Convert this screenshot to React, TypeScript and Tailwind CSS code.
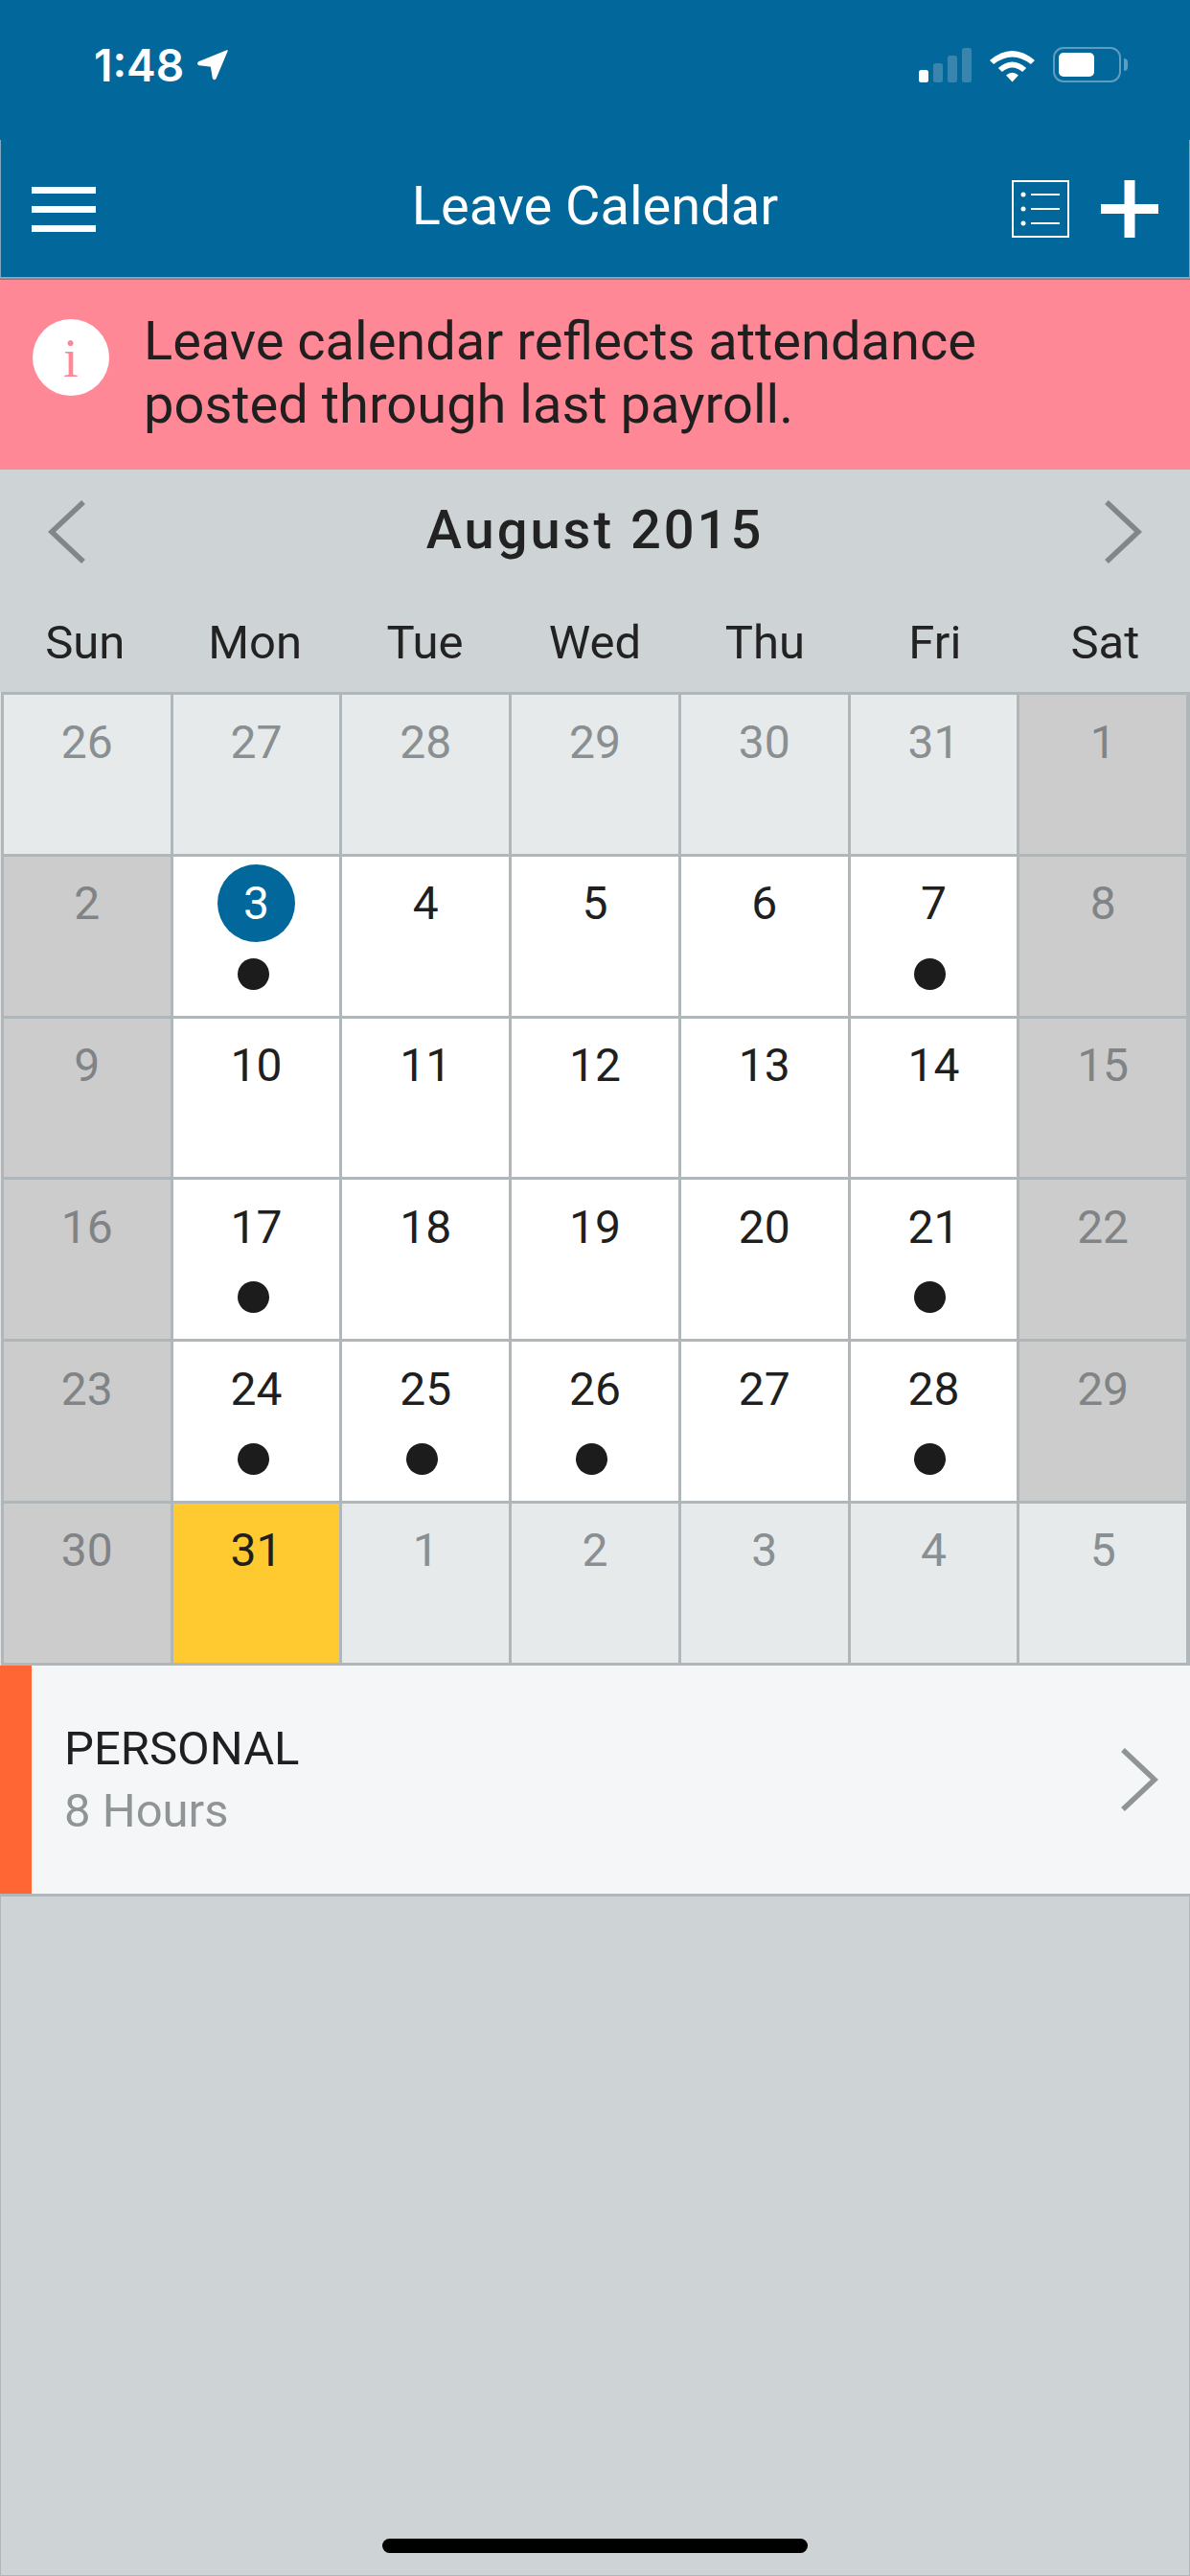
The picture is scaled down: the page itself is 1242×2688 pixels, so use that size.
const weekdays = ['Sun', 'Mon', 'Tue', 'Wed', 'Thu', 'Fri', 'Sat'];

type Kind = 'other' | 'weekend' | 'day' | 'today';
type Cell = { n: number; kind: Kind; dot?: boolean; selected?: boolean };

const o = (n: number): Cell => ({ n, kind: 'other' });
const w = (n: number): Cell => ({ n, kind: 'weekend' });
const d = (n: number, dot = false): Cell => ({ n, kind: 'day', dot });

const cells: Cell[] = [
  o(26), o(27), o(28), o(29), o(30), o(31), w(1),
  w(2), { n: 3, kind: 'day', dot: true, selected: true }, d(4), d(5), d(6), d(7, true), w(8),
  w(9), d(10), d(11), d(12), d(13), d(14), w(15),
  w(16), d(17, true), d(18), d(19), d(20), d(21, true), w(22),
  w(23), d(24, true), d(25, true), d(26, true), d(27), d(28, true), w(29),
  w(30), { n: 31, kind: 'today' }, o(1), o(2), o(3), o(4), o(5),
];

const cellBg: Record<Kind, string> = {
  other: 'bg-[#e6eaeb] text-[#8a8f91]',
  weekend: 'bg-[#cccccc] text-[#808486]',
  day: 'bg-white text-[#1f1f1f]',
  today: 'bg-[#ffca30] text-[#1f1f1f]',
};

function DayCell({ cell }: { cell: Cell }) {
  return (
    <div className={`flex h-[165.8px] flex-col items-center ${cellBg[cell.kind]}`}>
      <div
        className={`mt-[8px] flex h-[81px] w-[81px] items-center justify-center rounded-full pt-[2px] ${
          cell.selected ? 'bg-[#02679a] text-white' : ''
        }`}
      >
        {cell.n}
      </div>
      {cell.dot && <div className="mr-[7px] mt-[17px] h-[33px] w-[33px] rounded-full bg-[#1c1c1c]" />}
    </div>
  );
}

function Chevron({ left, color, className }: { left?: boolean; color: string; className?: string }) {
  return (
    <svg className={className} width="40" height="66" viewBox="0 0 40 66" fill="none" stroke={color} strokeWidth="5.5">
      <path d={left ? 'M37 2 L4 33 L37 64' : 'M3 2 L36 33 L3 64'} />
    </svg>
  );
}

export default function App() {
  return (
    <div className="flex h-[2688px] w-[1242px] flex-col overflow-hidden bg-[#ced3d6] font-['Roboto',sans-serif]">
      {/* status bar */}
      <div className="flex h-[146px] items-start justify-between bg-[#02679a] pl-[98px] pr-[65px] pt-[45px] text-white">
        <div className="flex items-center gap-[14px]">
          <span className="font-['Inter',sans-serif] text-[46px] font-semibold leading-[46px]">1:48</span>
          <svg width="32" height="32" viewBox="0 0 32 32" fill="white">
            <path d="M31 1 L1.5 13 Q0 15 2 15.5 L14.5 17 L16.5 29.5 Q17.5 31.5 19 29.5 Z" stroke="white" strokeWidth="1.5" strokeLinejoin="round" />
          </svg>
        </div>
        <div className="flex items-end gap-[19px] pt-[4px]">
          <svg width="55" height="36" viewBox="0 0 55 36">
            <rect x="0" y="23" width="10" height="13" rx="2.5" fill="white" />
            <rect x="15" y="16" width="10" height="20" rx="2.5" fill="#3a85ae" />
            <rect x="30" y="8" width="10" height="28" rx="2.5" fill="#3a85ae" />
            <rect x="45" y="0" width="10" height="36" rx="2.5" fill="#3a85ae" />
          </svg>
          <svg width="47" height="36" viewBox="0 0 40 36" preserveAspectRatio="none" fill="white">
            <path d="M0 13 Q20 -7 40 13 L36.5 17 Q20 2 3.5 17 Z" />
            <path d="M7.5 21 Q20 8 32.5 21 L29 25 Q20 16 11 25 Z" />
            <path d="M14.5 28.5 Q20 23 25.5 28.5 L20 35.5 Z" />
          </svg>
          <div className="flex items-center gap-[3px]">
            <div className="flex h-[37px] w-[71px] items-center rounded-[11px] border-[2.5px] border-[#5f9dbf] pl-[3.5px]">
              <div className="h-[25px] w-[37px] rounded-[5px] bg-white" />
            </div>
            <div className="h-[13px] w-[4px] rounded-r-full bg-[#5f9dbf]" />
          </div>
        </div>
      </div>

      {/* nav bar */}
      <div className="grid h-[143px] grid-cols-[1fr_auto_1fr] items-start border-x border-[#7fa9c2] bg-[#02679a] text-white">
        <div className="flex flex-col gap-[13px] pl-[32px] pt-[49px]">
          <div className="h-[7px] w-[67px] bg-white" />
          <div className="h-[7px] w-[67px] bg-white" />
          <div className="h-[7px] w-[67px] bg-white" />
        </div>
        <div className="pt-[36px] text-[56px] leading-[66px]">Leave Calendar</div>
        <div className="flex justify-end gap-[33px] pr-[32px] pt-[42px]">
          <svg width="60" height="60" viewBox="0 0 60 60" fill="none" stroke="white">
            <rect x="1" y="1" width="58" height="58" strokeWidth="2" />
            <circle cx="12" cy="15" r="2.5" fill="white" stroke="none" />
            <circle cx="12" cy="30" r="2.5" fill="white" stroke="none" />
            <circle cx="12" cy="45" r="2.5" fill="white" stroke="none" />
            <path d="M20 15 H50 M20 30 H50 M20 45 H50" strokeWidth="2" />
          </svg>
          <svg width="60" height="60" viewBox="0 0 60 60" fill="white">
            <rect x="0" y="25" width="60" height="10" />
            <rect x="24.5" y="0" width="11" height="60" />
          </svg>
        </div>
      </div>
      <div className="h-[3px] bg-gradient-to-b from-[#8fb8d0] to-[#8b6a70]" />

      {/* notice */}
      <div className="flex h-[198px] items-start gap-[36px] bg-[#ff8896] pl-[34px] pt-[31px] text-[56px] leading-[66px] text-[#1f1f1f]">
        <div className="mt-[10px] flex h-[80px] w-[80px] shrink-0 items-center justify-center rounded-full bg-white font-['Liberation_Serif',serif] text-[57px] leading-none text-[#ff8896]">
          i
        </div>
        <div>
          Leave calendar reflects attendance
          <br />
          posted through last payroll.
        </div>
      </div>

      {/* month header */}
      <div className="flex h-[126px] items-center justify-between px-[50px]">
        <Chevron left color="#7f8789" className="mt-[4px]" />
        <span className="text-[56px] font-medium tracking-[3px] text-[#222222]">August 2015</span>
        <Chevron color="#7f8789" className="mt-[4px]" />
      </div>

      {/* weekday row */}
      <div className="grid h-[106px] grid-cols-7 pt-[4px] text-[49px] text-[#222222]">
        {weekdays.map((day) => (
          <div key={day} className="flex items-center justify-center">
            {day}
          </div>
        ))}
      </div>

      {/* calendar */}
      <div className="grid grid-cols-7 gap-[3px] border-l-[1px] border-[#e2e4e5] bg-[#b0b7ba] py-[3px] pl-[3px] pr-[4px] text-[48px]">
        {cells.map((cell, i) => (
          <DayCell key={i} cell={cell} />
        ))}
      </div>

      {/* leave entry */}
      <div className="flex h-[241px] border-b-[3px] border-[#b0b7ba] bg-[#f5f6f8]">
        <div className="w-[33px] bg-[#ff6633]" />
        <div className="flex flex-1 items-center justify-between pl-[34px] pr-[33px]">
          <div className="text-[49px] leading-[65px]">
            <div className="text-[#1f1f1f]">PERSONAL</div>
            <div className="text-[#8f9496]">8 Hours</div>
          </div>
          <Chevron color="#8f9496" />
        </div>
      </div>

      {/* empty area and home indicator */}
      <div className="flex flex-1 items-end justify-center border-x border-b border-[#b0b7ba] pb-[23px]">
        <div className="h-[15px] w-[444px] rounded-full bg-black" />
      </div>
    </div>
  );
}
